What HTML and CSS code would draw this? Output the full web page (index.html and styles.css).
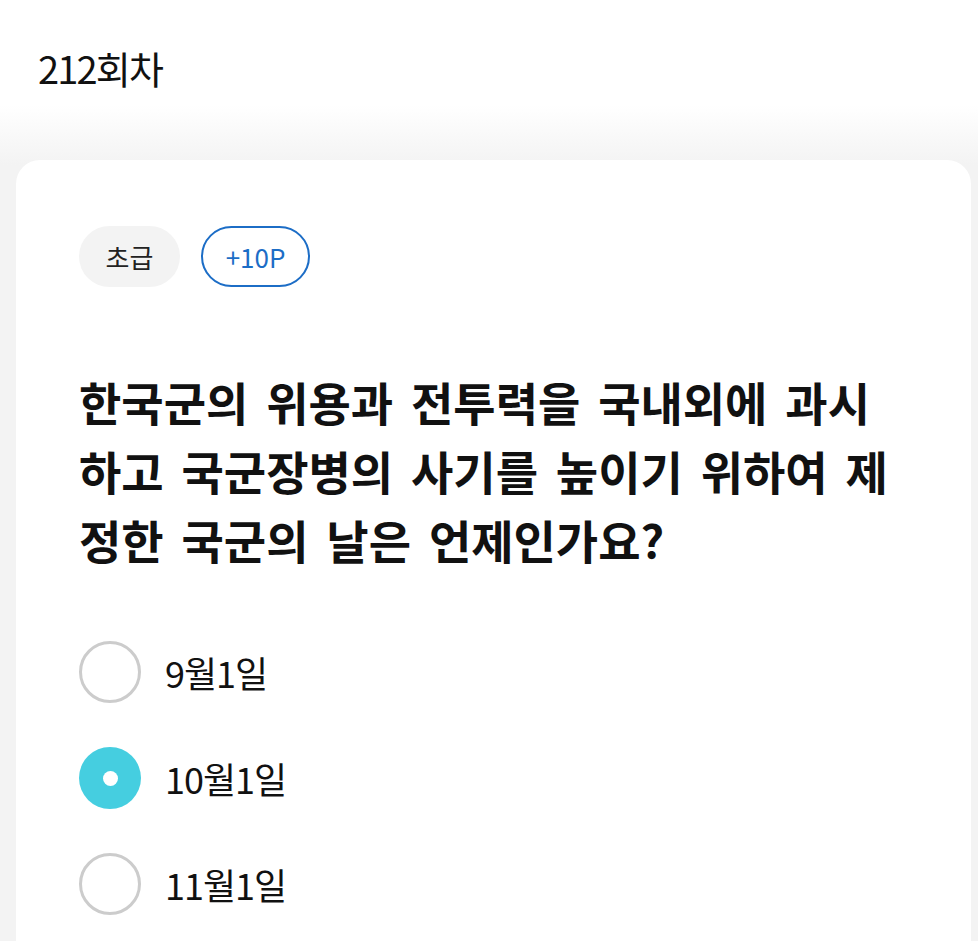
FILE: index.html
```html
<!DOCTYPE html>
<html lang="ko">
<head>
  <meta charset="utf-8">
  <title>212회차</title>
  <link rel="stylesheet" href="styles.css">
</head>
<body>
<div class="header">
  <h1 class="round-title">212회차</h1>
</div>

<div class="quiz-card">
  <div class="badges">
    <span class="badge level">초급</span>
    <span class="badge point">+10P</span>
  </div>

  <h2 class="question">한국군의 위용과 전투력을 국내외에 과시하고 국군장병의 사기를 높이기 위하여 제정한 국군의 날은 언제인가요?</h2>

  <ul class="options">
    <li class="option">
      <span class="radio"></span>
      <span class="option-label">9월1일</span>
    </li>
    <li class="option selected">
      <span class="radio"></span>
      <span class="option-label">10월1일</span>
    </li>
    <li class="option">
      <span class="radio"></span>
      <span class="option-label">11월1일</span>
    </li>
  </ul>
</div>
</body>
</html>
```

FILE: styles.css
```css
body {
  margin: 0;
  font-family: 'Noto Sans CJK KR', 'Noto Sans', sans-serif;
  color: #111;
  background: linear-gradient(#ffffff 0, #ffffff 105px, #f3f3f3 165px, #f3f3f3 100%);
  min-height: 941px;
}

.header {
  height: 160px;
  box-sizing: border-box;
  padding: 40px 0 0 38px;
}

.round-title {
  margin: 0;
  font-size: 38px;
  font-weight: 400;
  letter-spacing: -1.8px;
}

.quiz-card {
  margin: 0 7px 0 16px;
  background: white;
  border-radius: 24px 24px 0 0;
  padding: 66px 63px 40px;
  min-height: 781px;
  box-sizing: border-box;
}

.badges {
  display: flex;
  gap: 21px;
}

.badge {
  display: inline-flex;
  align-items: center;
  justify-content: center;
  height: 61px;
  box-sizing: border-box;
  border-radius: 31px;
  font-size: 26px;
}

.badge.level {
  width: 101px;
  background-color: #f3f3f3;
  color: #222;
}

.badge.point {
  width: 109px;
  border: 2px solid #1c6dc6;
  color: #1c6dc6;
}

.question {
  margin: 80px 0 67px;
  width: 815px;
  font-size: 46px;
  line-height: 69px;
  font-weight: 700;
  letter-spacing: 0;
  word-spacing: 5px;
}

.options {
  list-style: none;
  margin: 0;
  padding: 0;
  display: flex;
  flex-direction: column;
  gap: 44px;
}

.option {
  display: flex;
  align-items: center;
  gap: 24px;
}

.radio {
  width: 62px;
  height: 62px;
  box-sizing: border-box;
  border: 3px solid #cccccc;
  border-radius: 50%;
  display: flex;
  align-items: center;
  justify-content: center;
}

.option.selected .radio {
  border: none;
  background-color: #45cee0;
}

.option.selected .radio::after {
  content: '';
  width: 15px;
  height: 15px;
  border-radius: 50%;
  background: white;
}

.option-label {
  font-size: 36px;
  letter-spacing: -1px;
}
```
